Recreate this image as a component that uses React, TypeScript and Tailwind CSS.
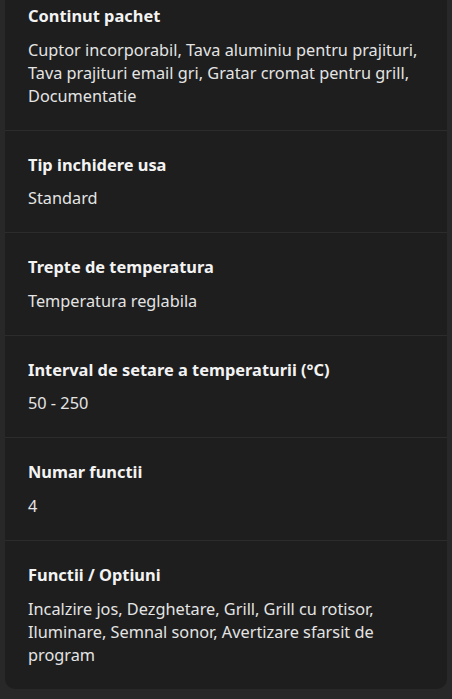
const items: { title: string; value: string; first?: boolean }[] = [
  {
    title: "Continut pachet",
    value:
      "Cuptor incorporabil, Tava aluminiu pentru prajituri, Tava prajituri email gri, Gratar cromat pentru grill, Documentatie",
    first: true,
  },
  { title: "Tip inchidere usa", value: "Standard" },
  { title: "Trepte de temperatura", value: "Temperatura reglabila" },
  { title: "Interval de setare a temperaturii (°C)", value: "50 - 250" },
  { title: "Numar functii", value: "4" },
  {
    title: "Functii / Optiuni",
    value:
      "Incalzire jos, Dezghetare, Grill, Grill cu rotisor, Iluminare, Semnal sonor, Avertizare sfarsit de program",
  },
];

export default function App() {
  return (
    <div
      className="min-h-screen bg-[#282828] px-[5px] pb-[12px]"
      style={{ fontFamily: '"Noto Sans", sans-serif' }}
    >
      <div className="bg-[#1e1e1e] rounded-b-[10px] flex flex-col">
        {items.map((it, i) => (
          <div
            key={it.title}
            className={
              (i > 0 ? "border-t border-[#2c2c2c] pt-[22px] " : "pt-[4px] ") +
              "px-[23px] pb-[22px] flex flex-col gap-[10.6px]"
            }
          >
            <div className="text-[16.4px] leading-[24px] font-bold text-[#f3f3f3]">{it.title}</div>
            <div className="text-[16.3px] leading-[23px] text-[#e4e4e4]">{it.value}</div>
          </div>
        ))}
      </div>
    </div>
  );
}
